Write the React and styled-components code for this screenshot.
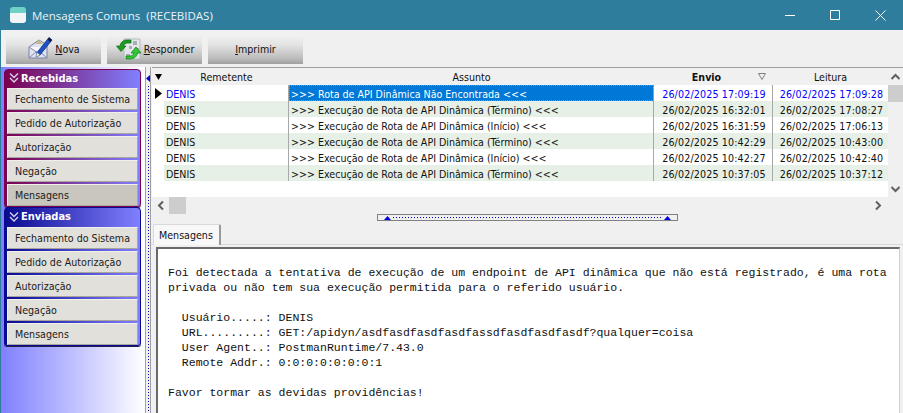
import React from 'react';
import styled, { createGlobalStyle } from 'styled-components';

const UI_FONT = '"DejaVu Sans", Verdana, sans-serif';

const Global = createGlobalStyle`
  html, body { margin: 0; padding: 0; background: #f0f0f0; }
  #root { width: 903px; height: 413px; overflow: hidden; }
`;

const Window = styled.div`
  width: 903px;
  height: 413px;
  box-sizing: border-box;
  border-left: 1px solid #2e7d9d;
  display: flex;
  flex-direction: column;
  overflow: hidden;
  background: #f0f0f0;
  font: 10.6px ${UI_FONT};
  font-stretch: condensed;
  color: #000;
`;

const TitleBar = styled.div`
  height: 30px;
  flex: none;
  margin-left: -1px;
  background: #2e7d9d;
  display: flex;
  align-items: center;
  color: #fff;
`;

const AppIcon = styled.div`
  width: 16px;
  height: 16px;
  margin-left: 10px;
  margin-right: 6px;
  border-radius: 3px;
  background: linear-gradient(#6fd0c8 0 6px, #f2f5f7 6px);
`;

const TitleText = styled.div`
  flex: 1;
  font: 11.5px "Open Sans", sans-serif;
  color: #eaf3f6;
  white-space: pre;
`;

const WinButton = styled.div`
  width: 45.33px;
  height: 30px;
  display: flex;
  align-items: center;
  justify-content: center;
`;

const Toolbar = styled.div`
  height: 37px;
  flex: none;
  box-sizing: border-box;
  padding: 4px 5px 3px;
  display: flex;
  gap: 6px;
`;

const ToolButton = styled.div`
  width: 95px;
  height: 30px;
  display: flex;
  align-items: center;
  justify-content: center;
  gap: 2px;
  background: linear-gradient(#f2f2f2, #e4e4e4 35%, #bdbdbd 80%, #a0a0a0);
  color: #111;
  u { text-underline-offset: 1px; }
`;

const Body = styled.div`
  flex: 1;
  min-height: 0;
  display: flex;
`;

const Sidebar = styled.div`
  width: 144px;
  flex: none;
  box-sizing: border-box;
  padding: 2px 3px 0;
  background: linear-gradient(90deg, #8080ff, #ffffff);
`;

const Group = styled.div`
  width: 137px;
  box-sizing: border-box;
  height: ${p => p.$h}px;
  border: 1px solid ${p => p.$dark};
  border-radius: 4px 4px 3px 3px;
  background: linear-gradient(90deg, ${p => p.$dark}, #8080ff);
  padding: 0 2px 1px;
  box-shadow: 0 1px 0 #202050;
`;

const GroupHeader = styled.div`
  height: ${p => p.$h}px;
  box-sizing: border-box;
  padding: 0 0 2px 2px;
  display: flex;
  align-items: center;
  gap: 2px;
  color: #fff;
  font-weight: 700;
  font-size: 11px;
`;

const Item = styled.div`
  height: 22px;
  box-sizing: border-box;
  margin-bottom: 2px;
  padding-left: 7px;
  display: flex;
  align-items: center;
  white-space: nowrap;
  color: #1a1a1a;
  background: ${p => (p.$active ? '#c9c6bd' : '#e2e0da')};
  border-right: 1px solid #a8a69e;
  border-bottom: 1px solid #a8a69e;
  border-top: 1px solid #f0efea;
  border-left: 1px solid #f0efea;
`;

const VSplit = styled.div`
  width: 6px;
  flex: none;
  box-sizing: border-box;
  border-left: 1px solid #a0a0a0;
  border-right: 1px solid #a0a0a0;
  background: #f0f0f0;
  display: flex;
  flex-direction: column;
  align-items: center;
  padding-top: 8px;
`;

const VDots = styled.div`
  flex: 1;
  width: 1px;
  margin-top: 4px;
  margin-left: 1px;
  background: repeating-linear-gradient(#0000c0 0 1px, transparent 1px 3px);
`;

const Right = styled.div`
  flex: 1;
  min-width: 0;
  display: flex;
  flex-direction: column;
`;

const GridArea = styled.div`
  height: 129px;
  flex: none;
  display: flex;
  margin-left: 1px;
  border-top: 1px solid #a0a0a0;
  background: #fff;
`;

const GridMain = styled.div`
  width: 736px;
  flex: none;
  display: flex;
  flex-direction: column;
  background: #fff;
`;

const Columns = styled.div`
  display: grid;
  grid-template-columns: 12px 125px 365px 119px 115px;
  height: ${p => p.$h}px;
  background: ${p => p.$bg || 'transparent'};
`;

const Indicator = styled.div`
  background: #fff;
  display: flex;
  align-items: center;
  justify-content: flex-start;
  padding-left: 3px;
`;

const HeadIndicator = styled(Indicator)`
  background: #f0f0f0;
`;

const HeadCell = styled.div`
  display: flex;
  align-items: center;
  justify-content: center;
  position: relative;
  box-sizing: border-box;
  padding: 1px ${p => (p.$sorted ? 14 : 0)}px 0 0;
  font-weight: ${p => (p.$sorted ? 700 : 400)};
  background: #f0f0f0;
  color: #111;
`;

const SortMark = styled.svg`
  position: absolute;
  right: 7px;
  top: 5px;
`;

const Cell = styled.div`
  box-sizing: border-box;
  display: flex;
  align-items: center;
  padding: 1px 0 0 2px;
  justify-content: ${p => (p.$date ? 'center' : 'flex-start')};
  letter-spacing: ${p => (p.$date ? '0.15px' : 'normal')};
  white-space: nowrap;
  overflow: hidden;
  border-right: ${p => (p.$last ? 'none' : '1px solid #a8a8a8')};
  color: ${p => (p.$blue ? '#0000ff' : '#111')};
`;

const SelectedCell = styled(Cell)`
  background: #0078d7;
  color: #fff;
  outline: 1px dotted #e08020;
  outline-offset: -1px;
  border-right: 1px solid #a8a8a8;
`;

const VScroll = styled.div`
  width: 15px;
  flex: none;
  background: #f0f0f0;
  display: flex;
  flex-direction: column;
  align-items: center;
`;

const ScrollEnd = styled.div`
  height: 17px;
  width: 100%;
  display: flex;
  align-items: center;
  justify-content: center;
  flex: none;
`;

const VThumb = styled.div`
  width: 100%;
  height: 17px;
  background: #cdcdcd;
`;

const VSpacer = styled.div`
  flex: 1;
`;

const HScroll = styled.div`
  height: 17px;
  flex: none;
  display: flex;
  align-items: center;
  padding-left: 1px;
  padding-right: 17px;
  background: #f0f0f0;
`;

const HEnd = styled.div`
  width: 17px;
  height: 17px;
  flex: none;
  display: flex;
  align-items: center;
  justify-content: center;
`;

const HThumb = styled.div`
  width: 17px;
  height: 17px;
  background: #cdcdcd;
`;

const HSpacer = styled.div`
  flex: 1;
`;

const HSplitRow = styled.div`
  height: 7px;
  flex: none;
  display: flex;
  justify-content: flex-start;
  padding-left: 226px;
`;

const HSplit = styled.div`
  width: 301px;
  height: 7px;
  box-sizing: border-box;
  border: 1px solid #808080;
  background: #f0f0f0;
  display: flex;
  align-items: center;
  padding: 0 6px;
  gap: 2px;
`;

const HDots = styled.div`
  flex: 1;
  height: 1px;
  background: repeating-linear-gradient(90deg, #0000c0 0 1px, transparent 1px 3px);
`;

const TabStrip = styled.div`
  height: 21px;
  flex: none;
  margin-top: 2px;
  padding-left: 2px;
  display: flex;
  align-items: flex-end;
  border-bottom: 1px solid #d9d9d9;
`;

const Tab = styled.div`
  width: 68px;
  height: 21px;
  box-sizing: border-box;
  margin-bottom: -1px;
  padding-left: 5px;
  display: flex;
  align-items: center;
  background: #f8f8f8;
  color: #112;
  border: 1px solid #d9d9d9;
  border-bottom: none;
  border-right: 2px solid #9a9a9a;
  border-radius: 2px 2px 0 0;
`;

const Page = styled.div`
  flex: 1;
  min-height: 0;
  padding: 2px 3px 0 5px;
  display: flex;
`;

const Memo = styled.pre`
  flex: 1;
  margin: 0;
  box-sizing: border-box;
  border-top: 2px solid #696969;
  border-left: 2px solid #696969;
  border-right: 1px solid #d0d0d0;
  background: #fff;
  padding: 16px 0 0 10px;
  font: 11.53px/15px "Liberation Mono", "Courier New", monospace;
  color: #111;
  overflow: hidden;
`;

const DoubleChevron = () => (
  <svg width="10" height="12" viewBox="0 0 10 12" fill="none" stroke="#d8d8e8" strokeWidth="1.3">
    <path d="M1 1.500 5 5.500 9 1.500M1 6 5 10 9 6" />
  </svg>
);

const NovaIcon = () => (
  <svg width="26" height="26" viewBox="0 0 26 26">
    <path d="M2 11 12 4l8 5v13H2z" fill="#dfe3f2" stroke="#7a80a8" />
    <path d="M2 11l9 6 9-6" fill="#f6f6fb" stroke="#8088b0" />
    <path d="M2 22l8-7M20 22l-8-7" stroke="#8088b0" fill="none" />
    <path d="M12 4 8 8h8z" fill="#c9b98a" />
    <path d="M22 1.500 25 4 13 19l-4 2 1-4.500z" fill="#1f50c8" stroke="#0c2a70" strokeWidth=".7" />
    <path d="M22 1.500 25 4l-1.600 2-3-2.500z" fill="#101840" />
    <path d="M10 16.500l3 2.500-4 2z" fill="#e8e0c0" />
  </svg>
);

const ResponderIcon = () => (
  <svg width="27" height="23" viewBox="0 0 27 23">
    <path d="M9 1h16v20H9z" fill="#e4e6ea" stroke="#b4b8c0" />
    <path d="M18 3h4v4h-4zM14 8h3v3h-3zM21 10h3v3h-3zM11 16h4v3h-4z" fill="#a9adb6" />
    <path d="M12 2C8 2 5.500 4.500 5 8H1.500L6 13.500 11 8H8.500c.5-1.800 2-3 4.500-3h3V2z" fill="#1f9a24" stroke="#0a6a10" strokeWidth=".7" />
    <path d="M15 21c4 0 7-2.500 7.500-6H26L21 9l-5 6h3c-.5 2-2 3-4 3h-4v3z" fill="#35c835" stroke="#0a7a10" strokeWidth=".7" />
  </svg>
);

const Chevron = ({ dir }) => {
  const paths = {
    up: 'M1.500 6 5.500 2 9.500 6',
    down: 'M1.500 2 5.500 6 9.500 2',
    left: 'M6 1.500 2 5.500 6 9.500',
    right: 'M2 1.500 6 5.500 2 9.500',
  };
  const wide = dir === 'up' || dir === 'down';
  return (
    <svg width={wide ? 11 : 8} height={wide ? 8 : 11} fill="none" stroke="#606060" strokeWidth="2">
      <path d={paths[dir]} />
    </svg>
  );
};

const rows = [
  ['DENIS', '>>> Rota de API Dinâmica Não Encontrada <<<', '26/02/2025 17:09:19', '26/02/2025 17:09:28'],
  ['DENIS', '>>> Execução de Rota de API Dinâmica (Término) <<<', '26/02/2025 16:32:01', '26/02/2025 17:08:27'],
  ['DENIS', '>>> Execução de Rota de API Dinâmica (Início) <<<', '26/02/2025 16:31:59', '26/02/2025 17:06:13'],
  ['DENIS', '>>> Execução de Rota de API Dinâmica (Término) <<<', '26/02/2025 10:42:29', '26/02/2025 10:43:00'],
  ['DENIS', '>>> Execução de Rota de API Dinâmica (Início) <<<', '26/02/2025 10:42:27', '26/02/2025 10:42:40'],
  ['DENIS', '>>> Execução de Rota de API Dinâmica (Término) <<<', '26/02/2025 10:37:05', '26/02/2025 10:37:12'],
];

// The asdf run is 33 chars going by the line width in the screenshot. Only 32 could
// be read, so the doubled "s" in the middle is a guess at where the extra one sits.
const memoText = `Foi detectada a tentativa de execução de um endpoint de API dinâmica que não está registrado, é uma rota
privada ou não tem sua execução permitida para o referido usuário.

  Usuário.....: DENIS
  URL.........: GET:/apidyn/asdfasdfasdfasdfassdfasdfasdfasdf?qualquer=coisa
  User Agent..: PostmanRuntime/7.43.0
  Remote Addr.: 0:0:0:0:0:0:0:1

Favor tormar as devidas providências!`;

const recebidas = ['Fechamento de Sistema', 'Pedido de Autorização', 'Autorização', 'Negação', 'Mensagens'];
const enviadas = ['Fechamento do Sistema', 'Pedido de Autorização', 'Autorização', 'Negação', 'Mensagens'];

export default function App() {
  return (
    <Window>
      <Global />
      <TitleBar>
        <AppIcon />
        <TitleText>Mensagens Comuns  (RECEBIDAS)</TitleText>
        <WinButton>
          <svg width="10" height="10" stroke="#fff"><path d="M0 5.500h10" /></svg>
        </WinButton>
        <WinButton>
          <svg width="10" height="10" fill="none" stroke="#fff"><path d="M.5.500h9v9h-9z" /></svg>
        </WinButton>
        <WinButton>
          <svg width="11" height="11" fill="none" stroke="#fff"><path d="M.5.500l10 10M10.500.500l-10 10" /></svg>
        </WinButton>
      </TitleBar>
      <Toolbar>
        <ToolButton><NovaIcon /><span><u>N</u>ova</span></ToolButton>
        <ToolButton><ResponderIcon /><span><u>R</u>esponder</span></ToolButton>
        <ToolButton><span><u>I</u>mprimir</span></ToolButton>
      </Toolbar>
      <Body>
        <Sidebar>
          <Group $dark="#7a0050" $h={138}>
            <GroupHeader $h={18}><DoubleChevron />Recebidas</GroupHeader>
            {recebidas.map((t, i) => <Item key={t} $active={i === 4}>{t}</Item>)}
          </Group>
          <Group $dark="#0a0a90" $h={139}>
            <GroupHeader $h={19}><DoubleChevron />Enviadas</GroupHeader>
            {enviadas.map(t => <Item key={t}>{t}</Item>)}
          </Group>
        </Sidebar>
        <VSplit>
          <svg width="4" height="7"><path d="M4 0v7L0 3.500z" fill="#0000e0" /></svg>
          <VDots />
        </VSplit>
        <Right>
          <GridArea>
            <GridMain>
              <Columns $h={17}>
                <HeadIndicator>
                  <svg width="7" height="6"><path d="M0 0h7L3.500 6z" fill="#000" /></svg>
                </HeadIndicator>
                <HeadCell>Remetente</HeadCell>
                <HeadCell>Assunto</HeadCell>
                <HeadCell $sorted>
                  Envio
                  <SortMark width="8" height="7" fill="none" stroke="#808080"><path d="M.5.500h7L4 6.500z" /></SortMark>
                </HeadCell>
                <HeadCell>Leitura</HeadCell>
              </Columns>
              {rows.map((r, i) => {
                const first = i === 0;
                return (
                  <Columns key={r[2]} $h={16} $bg={i % 2 ? '#e6f0e6' : '#fff'}>
                    <Indicator>
                      {first && <svg width="7" height="11"><path d="M0 0l7 5.500L0 11z" fill="#000" /></svg>}
                    </Indicator>
                    <Cell $blue={first}>{r[0]}</Cell>
                    {first ? <SelectedCell>{r[1]}</SelectedCell> : <Cell>{r[1]}</Cell>}
                    <Cell $date $blue={first}>{r[2]}</Cell>
                    <Cell $date $last $blue={first}>{r[3]}</Cell>
                  </Columns>
                );
              })}
            </GridMain>
            <VScroll>
              <ScrollEnd><Chevron dir="up" /></ScrollEnd>
              <VThumb />
              <VSpacer />
              <ScrollEnd><Chevron dir="down" /></ScrollEnd>
            </VScroll>
          </GridArea>
          <HScroll>
            <HEnd><Chevron dir="left" /></HEnd>
            <HThumb />
            <HSpacer />
            <HEnd><Chevron dir="right" /></HEnd>
          </HScroll>
          <HSplitRow>
            <HSplit>
              <svg width="7" height="4"><path d="M0 4h7L3.500 0z" fill="#0000e0" /></svg>
              <HDots />
              <svg width="7" height="4"><path d="M0 4h7L3.500 0z" fill="#0000e0" /></svg>
            </HSplit>
          </HSplitRow>
          <TabStrip><Tab>Mensagens</Tab></TabStrip>
          <Page><Memo>{memoText}</Memo></Page>
        </Right>
      </Body>
    </Window>
  );
}
